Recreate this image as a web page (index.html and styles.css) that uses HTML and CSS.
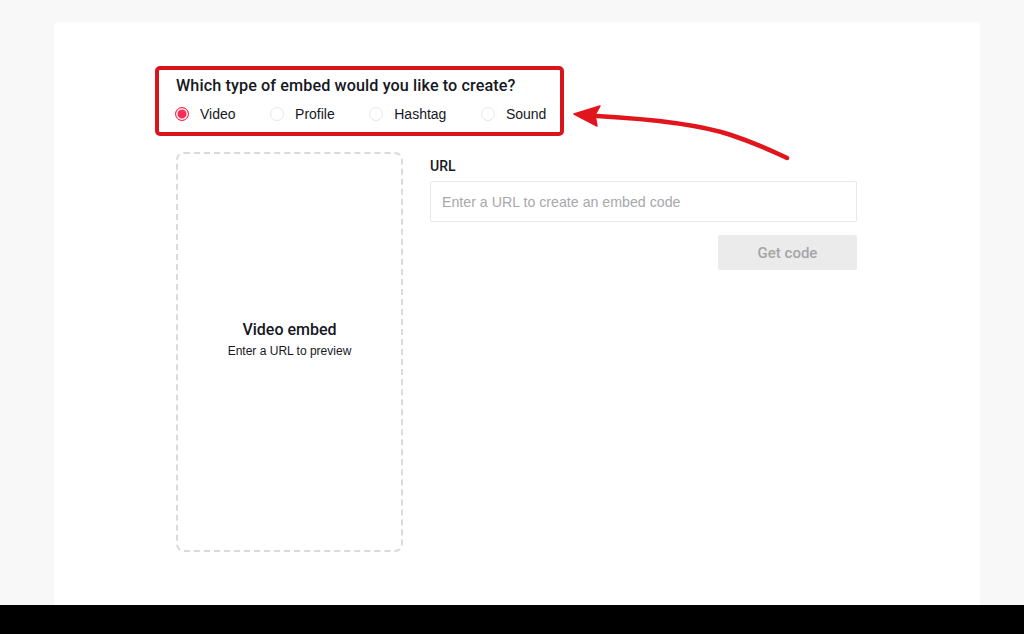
FILE: index.html
```html
<!DOCTYPE html>
<html lang="en">
<head>
<meta charset="utf-8">
<title>Embed</title>
<link rel="stylesheet" href="styles.css">
</head>
<body>
<div class="viewport">
  <div class="card">
    <div class="content">
      <div class="type-box">
        <div class="type-title">Which type of embed would you like to create?</div>
        <div class="radios">
          <label class="radio"><span class="dot dot-on"></span><span>Video</span></label>
          <label class="radio"><span class="dot"></span><span>Profile</span></label>
          <label class="radio"><span class="dot"></span><span>Hashtag</span></label>
          <label class="radio"><span class="dot"></span><span>Sound</span></label>
        </div>
      </div>
      <div class="main-row">
        <div class="preview">
          <div class="preview-title">Video embed</div>
          <div class="preview-sub">Enter a URL to preview</div>
        </div>
        <div class="form">
          <div class="form-label">URL</div>
          <div class="input">Enter a URL to create an embed code</div>
          <div class="btn-row"><div class="btn">Get code</div></div>
        </div>
      </div>
    </div>
  </div>
  <svg class="arrow" width="240" height="70" viewBox="0 0 240 70" xmlns="http://www.w3.org/2000/svg">
    <path d="M26 21 C 80 24, 130 30, 160 40 S 205 58, 216 63" fill="none" stroke="#e0161c" stroke-width="4.5" stroke-linecap="round"/>
    <path d="M3 19 L 29 11 L 24 20 L 26 31 Z" fill="#e0161c" stroke="#e0161c" stroke-width="1.5" stroke-linejoin="round"/>
  </svg>
</div>
<div class="footer-bar"></div>
</body>
</html>
```
FILE: styles.css
```css
* { box-sizing: border-box; }
html, body { margin: 0; padding: 0; }
body {
  width: 1024px;
  height: 634px;
  overflow: hidden;
  background: #f8f8f8;
  font-family: "Liberation Sans", Arial, sans-serif;
  color: #161823;
}
.viewport {
  position: relative;
  height: 605px;
  overflow: hidden;
  padding: 22px 44px 0 54px;
}
.card {
  background: #fff;
  border-radius: 4px 4px 0 0;
  height: 600px;
  padding: 44px 0 0 122px;
}
.content {
  width: 681px;
}
.type-box {
  width: 409px;
  margin-left: -21px;
  height: 70px;
  border: 4px solid #d9141b;
  border-radius: 5px;
  padding: 6px 0 0 17px;
}
.type-title {
  font-family: Roboto, "Liberation Sans", Arial, sans-serif;
  font-size: 16.2px;
  font-weight: 500;
  line-height: 20px;
  letter-spacing: 0.1px;
}
.radios {
  display: flex;
  align-items: center;
  gap: 34.5px;
  margin-top: 9px;
  margin-left: -1px;
}
.radio {
  display: flex;
  align-items: center;
  gap: 11px;
  font-size: 14px;
  line-height: 18px;
  color: #161823;
}
.dot {
  width: 14px;
  height: 14px;
  border-radius: 50%;
  border: 1px solid #e6e6e8;
  background: #fff;
  flex: none;
}
.dot-on {
  border: 1px solid #fe2c55;
  background: #fe2c55;
  box-shadow: inset 0 0 0 1.5px #fff;
}
.main-row {
  display: flex;
  gap: 27px;
  margin-top: 16px;
}
.preview {
  width: 227px;
  height: 400px;
  border: 2px dashed #dadadc;
  border-radius: 8px;
  display: flex;
  flex-direction: column;
  align-items: center;
  justify-content: center;
  padding-bottom: 26px;
}
.preview-title {
  font-family: Roboto, "Liberation Sans", Arial, sans-serif;
  font-size: 16px;
  font-weight: 500;
  line-height: 20px;
}
.preview-sub {
  font-size: 12px;
  line-height: 16px;
  margin-top: 3px;
}
.form {
  width: 427px;
  display: flex;
  flex-direction: column;
}
.form-label {
  font-family: Roboto, "Liberation Sans", Arial, sans-serif;
  font-size: 14px;
  font-weight: 500;
  line-height: 18px;
  margin-top: 5px;
}
.input {
  margin-top: 6px;
  height: 41px;
  border: 1px solid #e8e8ea;
  border-radius: 2px;
  padding: 0 11px;
  display: flex;
  align-items: center;
  font-size: 14.2px;
  color: #a8a8ab;
}
.btn-row {
  display: flex;
  justify-content: flex-end;
  margin-top: 13px;
}
.btn {
  width: 139px;
  height: 35px;
  background: #ebebeb;
  border-radius: 2px;
  display: flex;
  align-items: center;
  justify-content: center;
  font-family: Roboto, "Liberation Sans", Arial, sans-serif;
  font-size: 15px;
  font-weight: 500;
  color: #a5a5a8;
}
.arrow {
  position: absolute;
  left: 571px;
  top: 95px;
}
.footer-bar {
  height: 29px;
  background: #000;
}
```
